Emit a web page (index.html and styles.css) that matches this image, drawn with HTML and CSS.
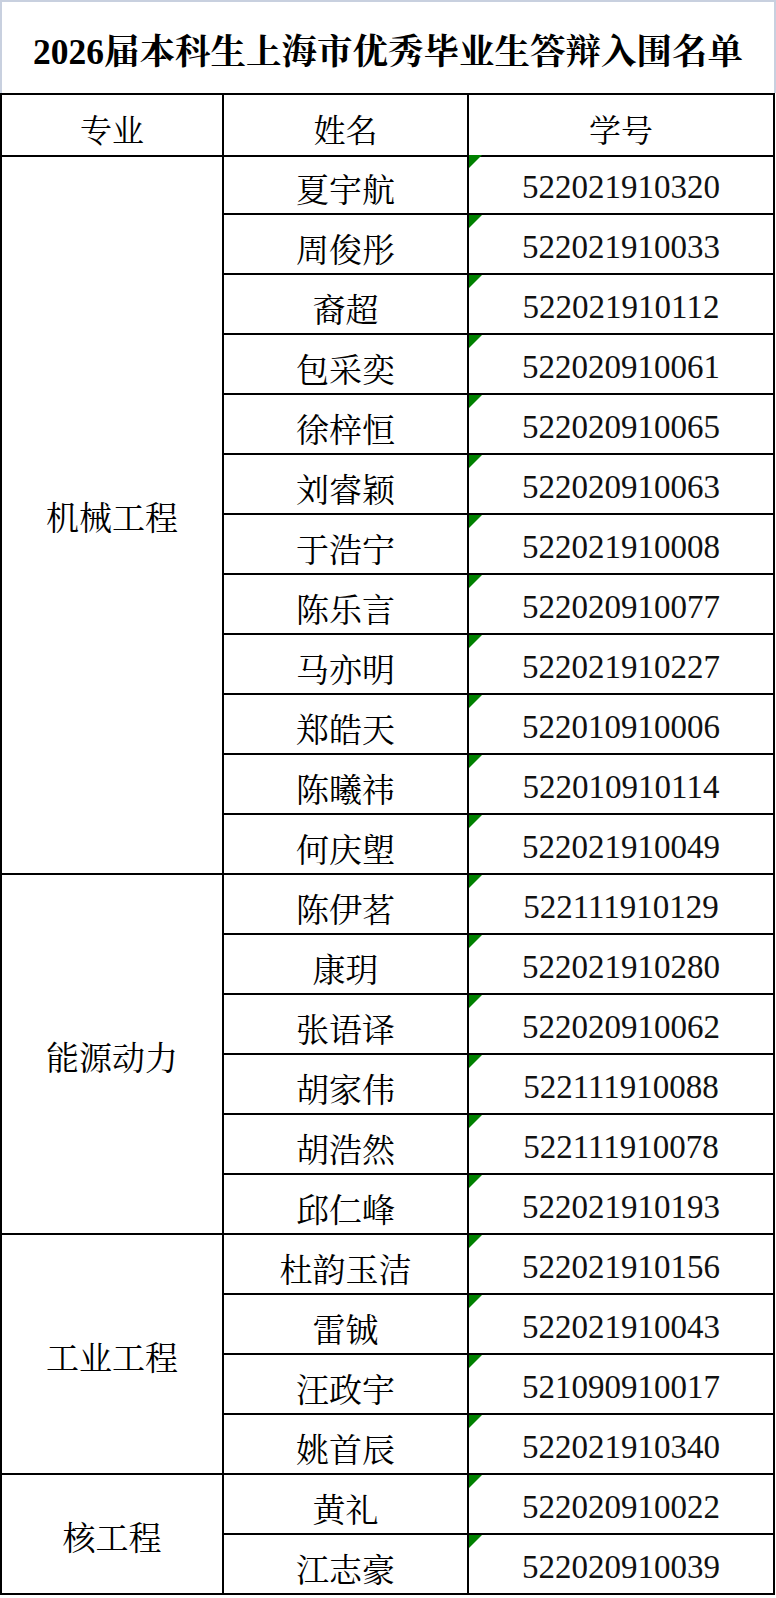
FILE: index.html
```html
<!DOCTYPE html>
<html lang="zh-CN">
<head>
<meta charset="utf-8">
<title>2026届本科生上海市优秀毕业生答辩入围名单</title>
<link rel="stylesheet" href="styles.css">
</head>
<body>
<div class="sheet">
  <div class="title">2026届本科生上海市优秀毕业生答辩入围名单</div>
  <div class="grid">
    <div class="cell head c1">专业</div>
    <div class="cell head c2">姓名</div>
    <div class="cell head c3">学号</div>

    <div class="cell major c1 span12">机械工程</div>
    <div class="cell c2">夏宇航</div><div class="cell c3 id">522021910320</div>
    <div class="cell c2">周俊彤</div><div class="cell c3 id">522021910033</div>
    <div class="cell c2">裔超</div><div class="cell c3 id">522021910112</div>
    <div class="cell c2">包采奕</div><div class="cell c3 id">522020910061</div>
    <div class="cell c2">徐梓恒</div><div class="cell c3 id">522020910065</div>
    <div class="cell c2">刘睿颖</div><div class="cell c3 id">522020910063</div>
    <div class="cell c2">于浩宁</div><div class="cell c3 id">522021910008</div>
    <div class="cell c2">陈乐言</div><div class="cell c3 id">522020910077</div>
    <div class="cell c2">马亦明</div><div class="cell c3 id">522021910227</div>
    <div class="cell c2">郑皓天</div><div class="cell c3 id">522010910006</div>
    <div class="cell c2">陈曦祎</div><div class="cell c3 id">522010910114</div>
    <div class="cell c2">何庆塱</div><div class="cell c3 id">522021910049</div>

    <div class="cell major c1 span6">能源动力</div>
    <div class="cell c2">陈伊茗</div><div class="cell c3 id">522111910129</div>
    <div class="cell c2">康玥</div><div class="cell c3 id">522021910280</div>
    <div class="cell c2">张语译</div><div class="cell c3 id">522020910062</div>
    <div class="cell c2">胡家伟</div><div class="cell c3 id">522111910088</div>
    <div class="cell c2">胡浩然</div><div class="cell c3 id">522111910078</div>
    <div class="cell c2">邱仁峰</div><div class="cell c3 id">522021910193</div>

    <div class="cell major c1 span4">工业工程</div>
    <div class="cell c2">杜韵玉洁</div><div class="cell c3 id">522021910156</div>
    <div class="cell c2">雷铖</div><div class="cell c3 id">522021910043</div>
    <div class="cell c2">汪政宇</div><div class="cell c3 id">521090910017</div>
    <div class="cell c2">姚首辰</div><div class="cell c3 id">522021910340</div>

    <div class="cell major c1 span2">核工程</div>
    <div class="cell c2">黄礼</div><div class="cell c3 id">522020910022</div>
    <div class="cell c2">江志豪</div><div class="cell c3 id">522020910039</div>
  </div>
</div>
</body>
</html>
```
FILE: styles.css
```css
html, body {
  margin: 0;
  padding: 0;
  background: #ffffff;
}

.sheet {
  width: 776px;
  font-family: "Liberation Serif", "Noto Serif CJK SC", "Noto Sans CJK SC", serif;
  color: #000000;
}

.title {
  box-sizing: border-box;
  height: 93px;
  border-top: 2px solid #c8d0df;
  border-left: 2px solid #c8d0df;
  border-right: 2px solid #c8d0df;
  display: flex;
  align-items: center;
  justify-content: center;
  font-size: 35.5px;
  font-weight: bold;
  padding-top: 2px;
  white-space: nowrap;
}

.grid {
  display: grid;
  grid-template-columns: 222px 245px 306px;
  grid-auto-rows: 60px;
  width: 773px;
  border-left: 2px solid #000;
  border-top: 2px solid #000;
}

.cell {
  box-sizing: border-box;
  border-right: 2px solid #000;
  border-bottom: 2px solid #000;
  display: flex;
  align-items: center;
  justify-content: center;
  padding-top: 6px;
  font-size: 33px;
  white-space: nowrap;
  position: relative;
}

.major {
  padding-top: 3px;
}

.head {
  height: 62px;
  font-size: 32px;
  padding-top: 5px;
}

.grid > .head {
  grid-row: 1;
}

.c1 { grid-column: 1; }
.c2 { grid-column: 2; }
.c3 { grid-column: 3; }

.span12 { grid-row: span 12; }
.span6 { grid-row: span 6; }
.span4 { grid-row: span 4; }
.span2 { grid-row: span 2; }

.id {
  color: #111;
}

.id::before {
  content: "";
  position: absolute;
  left: 0;
  top: 0;
  width: 13px;
  height: 13px;
  background: #008000;
  clip-path: polygon(0 0, 100% 0, 0 100%);
}
```
